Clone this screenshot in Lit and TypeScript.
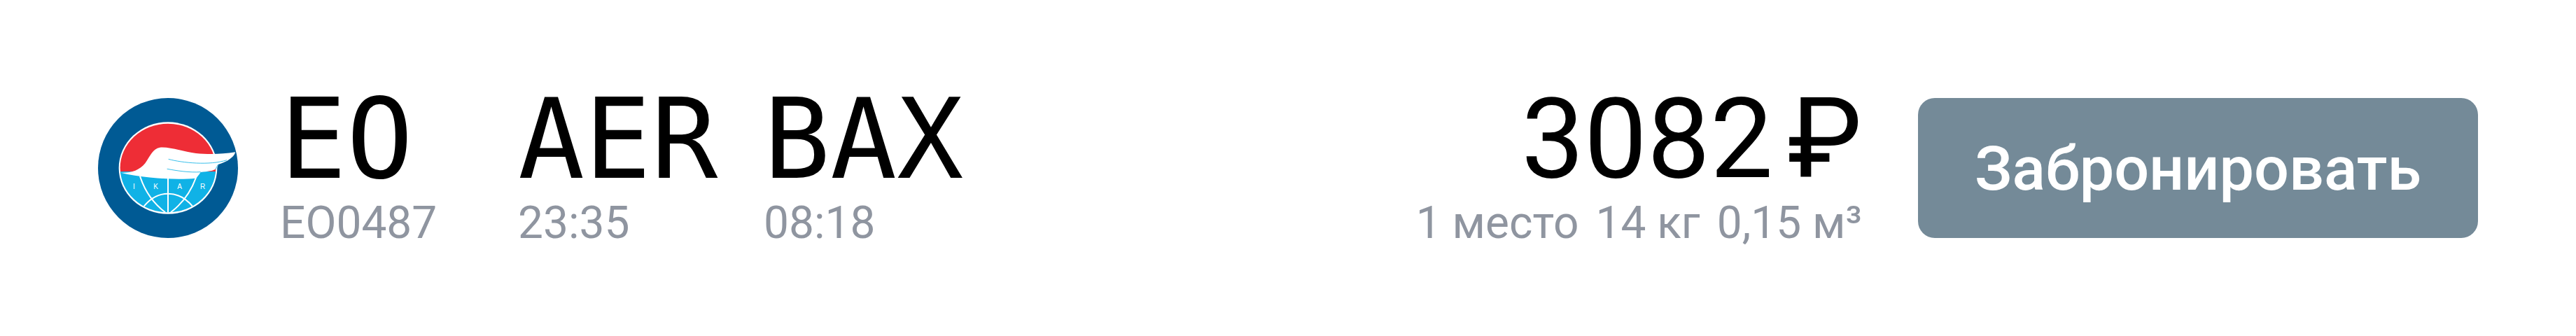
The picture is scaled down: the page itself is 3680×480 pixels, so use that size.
import { LitElement, html, css } from "lit";
import { customElement } from "lit/decorators.js";

@customElement("app-root")
export class AppRoot extends LitElement {
  static styles = css`
    :host { display: block; width: 3680px; height: 480px; background: #fff; font-family: Roboto, "Liberation Sans", sans-serif; }
    .row { display: flex; align-items: flex-start; padding: 140px; box-sizing: border-box; height: 480px; }
    .logo { width: 200px; height: 200px; flex: none; display: block; }
    .col { display: flex; flex-direction: column; gap: 29px; flex: none; }
    .big { font-size: 160px; line-height: 118px; color: #000; white-space: nowrap; }
    .mono { font-family: "DejaVu Sans Mono", monospace; font-size: 158px; }
    .small { font-size: 64px; line-height: 64px; color: #8f95a0; white-space: nowrap; }
    .carrier { margin-left: 60px; width: 340px; }
    .from { width: 351px; }
    .to { width: 300px; }
    .spacer { flex: 1; }
    .price { align-items: flex-end; margin-right: 80px; }
    .amount { display: flex; gap: 21px; }
    .meta { display: flex; gap: 24px; }
    .btn { flex: none; width: 800px; height: 200px; border: 0; border-radius: 24px; background: #748a98; color: #fff; font: 500 88px Roboto, sans-serif; display: flex; align-items: center; justify-content: center; }
  `;

  render() {
    return html`<div class="row">
      <svg class="logo" viewBox="60 60 600 600" aria-label="IKAR">
        <circle cx="360" cy="360" r="300" fill="#005a94"></circle>
        <ellipse cx="360" cy="360" rx="211" ry="197" fill="#fff"></ellipse>
        <defs><clipPath id="c"><ellipse cx="360" cy="360" rx="205" ry="190"></ellipse></clipPath></defs>
        <g clip-path="url(#c)">
          <rect x="150" y="165" width="420" height="215" fill="#ee2d36"></rect>
          <rect x="150" y="375" width="420" height="190" fill="#10b2e6"></rect>
          <g fill="none" stroke="#fff" stroke-width="6">
            <path d="M360 400V552"></path>
            <path d="M240 395Q270 490 348 550"></path>
            <path d="M482 395Q450 490 372 550"></path>
            <path d="M256 525Q300 470 360 470T466 525"></path>
          </g>
        </g>
        <path d="M158 380C200 382 235 372 262 340C285 305 295 278 325 272C370 268 430 292 480 297C530 302 590 302 648 292C648 305 625 328 590 340L575 345C572 365 565 372 500 378C490 392 485 400 478 404C400 412 260 405 158 380Z" fill="#fff"></path>
        <path d="M362 322C420 338 540 350 612 326M356 364C400 372 450 380 500 377M575 345L563 366" fill="none" stroke="#10b2e6" stroke-width="2.5"></path>
        <g fill="#fff" font-family="Liberation Sans, sans-serif" font-size="30" text-anchor="middle">
          <text x="214" y="449">I</text><text x="308" y="449">K</text><text x="410" y="449">A</text><text x="509" y="449">R</text>
        </g>
      </svg>
      <div class="col carrier"><div class="big mono">EO</div><div class="small">EO0487</div></div>
      <div class="col from"><div class="big mono">AER</div><div class="small">23:35</div></div>
      <div class="col to"><div class="big mono">BAX</div><div class="small">08:18</div></div>
      <div class="spacer"></div>
      <div class="col price">
        <div class="big amount"><span>3082</span><span>₽</span></div>
        <div class="small meta"><span>1 место</span><span>14 кг</span><span>0,15 м³</span></div>
      </div>
      <button class="btn">Забронировать</button>
    </div>`;
  }
}
